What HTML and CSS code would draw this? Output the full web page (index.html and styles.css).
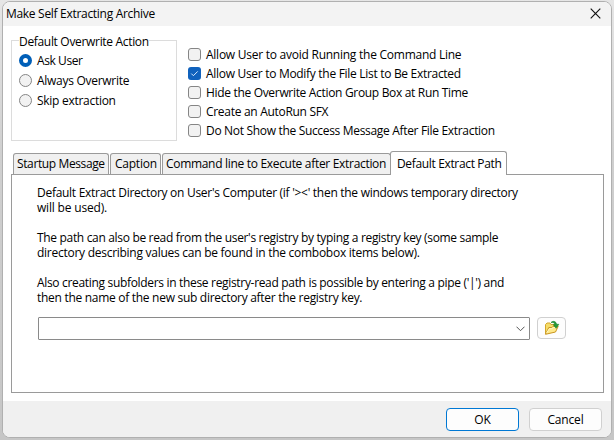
FILE: index.html
```html
<!DOCTYPE html>
<html lang="en">
<head>
<meta charset="utf-8">
<title>Make Self Extracting Archive</title>
<link rel="stylesheet" href="styles.css">
</head>
<body>
<div class="window">
  <header class="titlebar">
    <span>Make Self Extracting Archive</span>
    <svg class="close" width="11" height="11" viewBox="0 0 11 11"><path d="M.7.7l9.6 9.6M10.3.7L.7 10.3" stroke="#111" stroke-width="1.15"/></svg>
  </header>
  <main class="content">
    <section class="options">
      <div class="group">
        <div class="legend"><span>Default Overwrite Action</span></div>
        <label class="radio"><i class="dot on"></i><span class="ask">Ask User</span></label>
        <label class="radio"><i class="dot"></i><span>Always Overwrite</span></label>
        <label class="radio"><i class="dot"></i><span>Skip extraction</span></label>
      </div>
      <div class="checks">
        <label class="check"><i class="box"></i><span class="c1">Allow User to avoid Running the Command Line</span></label>
        <label class="check"><i class="box on"><svg width="13" height="13" viewBox="0 0 13 13"><path d="M3.3 6.6l2.1 2.1 4.3-4.3" fill="none" stroke="#d9ebff" stroke-width="1"/></svg></i><span class="c2">Allow User to Modify the File List to Be Extracted</span></label>
        <label class="check"><i class="box"></i><span class="c3">Hide the Overwrite Action Group Box at Run Time</span></label>
        <label class="check"><i class="box"></i><span class="c4">Create an AutoRun SFX</span></label>
        <label class="check"><i class="box"></i><span class="c5">Do Not Show the Success Message After File Extraction</span></label>
      </div>
    </section>
    <nav class="tabs">
      <div class="tab startup">Startup Message</div>
      <div class="tab caption">Caption</div>
      <div class="tab command">Command line to Execute after Extraction</div>
      <div class="tab active">Default Extract Path</div>
    </nav>
    <section class="panel">
      <p><span class="l1">Default Extract Directory on User's Computer (if '&gt;&lt;' then the windows temporary directory</span><span class="l2">will be used).</span></p>
      <p><span class="l3">The path can also be read from the user's registry by typing a registry key (some sample</span><span class="l4">directory describing values can be found in the combobox items below).</span></p>
      <p><span class="l5">Also creating subfolders in these registry-read path is possible by entering a pipe ('|') and</span><span class="l6">then the name of the new sub directory after the registry key.</span></p>
      <div class="row">
        <div class="combo"><svg width="9" height="6" viewBox="0 0 9 6"><path d="M.5.7l4 4 4-4" fill="none" stroke="#555" stroke-width="1"/></svg></div>
        <div class="browse">
          <svg width="16" height="16" viewBox="0 0 16 16">
            <path d="M1.5 14V4.5L3 3h3l1 1.5h4.5V8" fill="#f5dc68" stroke="#d3a52c"/>
            <path d="M1.5 14.3L4.8 7.5h3L9 6.3h5.2L11.5 12z" fill="#ffe98a" stroke="#c9951f"/>
            <path d="M2.5 13L5.3 8.7h2.9l1-1.2h2.6" fill="none" stroke="#fff7c4"/>
            <path d="M7 2.5C9 .6 12 1 12.6 4.3h2.2l-2.7 4-2.8-3.6h1.6C10.4 2.7 9 2.2 7 2.5z" fill="#249b38" stroke="#16802a" stroke-width=".6"/>
          </svg>
        </div>
      </div>
    </section>
  </main>
  <footer class="footer">
    <div class="button primary">OK</div>
    <div class="button">Cancel</div>
  </footer>
</div>
</body>
</html>
```
FILE: styles.css
```css
* { box-sizing: border-box; }
body {
  margin: 0;
  height: 440px;
  overflow: hidden;
  padding: 1px 2px 2px;
  background: linear-gradient(#e6e6e6, #cfcfcf 35%, #c6c6c6);
  font: 12px/15px "Open Sans", "Noto Sans", sans-serif;
  letter-spacing: -0.28px;
  color: #000;
  white-space: nowrap;
}
.window {
  width: 610px;
  height: 437px;
  display: flex;
  flex-direction: column;
  border: 1px solid #b0b0b0;
  border-radius: 8px;
  background: #fff;
  overflow: hidden;
}
.titlebar {
  height: 24px;
  flex: none;
  display: flex;
  align-items: center;
  justify-content: space-between;
  padding: 0 10px 2px 3px;
  background: #f3f3f3;
  letter-spacing: -0.3px;
}
.content { flex: 1; padding: 9px 7px 0 8px; }
.options { display: flex; gap: 11px; height: 115px; }
.group {
  width: 166px;
  height: 101px;
  margin-top: 5px;
  border: 1px solid #dcdcdc;
  padding-left: 7px;
}
.legend { height: 10px; margin-top: -1px; display: flex; align-items: flex-start; }
.legend span { margin-top: -6px; background: #fff; letter-spacing: -0.32px; }
.radio { display: flex; align-items: center; gap: 5px; height: 20px; }
.dot {
  width: 13px;
  height: 13px;
  border: 1px solid #858585;
  border-radius: 50%;
  background: #f2f2f2;
}
.dot.on { border: 4px solid #005fb8; background: #fff; }
.ask { letter-spacing: -0.42px; }
.checks { padding-top: 10px; }
.check { display: flex; align-items: center; gap: 5px; height: 19px; }
.box {
  width: 13px;
  height: 13px;
  border: 1px solid #858585;
  border-radius: 3px;
  background: #f2f2f2;
}
.box.on { border: 0; background: #1062bd; }
.box svg { display: block; }
.c1 { letter-spacing: -0.25px; }
.c2, .c4 { letter-spacing: -0.3px; }
.c3 { letter-spacing: -0.32px; }
.c5 { letter-spacing: -0.32px; }
.tabs { display: flex; align-items: flex-end; height: 24px; margin-left: 2px; }
.tab {
  height: 21px;
  margin-right: 1px;
  padding: 2px 0 0 3px;
  border: 1px solid #9a9a9a;
  border-bottom: 0;
  border-radius: 3px 3px 0 0;
  background: #f0f0f0;
}
.startup { width: 96px; letter-spacing: -0.38px; }
.caption { width: 51px; padding-left: 4px; letter-spacing: -0.24px; }
.command { width: 229px; letter-spacing: -0.31px; margin-right: 0; }
.tab.active {
  position: relative;
  width: 117px;
  height: 24px;
  margin: 0 0 -1px -1px;
  padding: 4px 0 0 6px;
  background: #fff;
  letter-spacing: -0.345px;
}
.panel {
  height: 219px;
  border: 1px solid #9a9a9a;
  padding: 10px 0 0 25px;
}
.panel p { margin: 0 0 15px; }
.panel p span { display: block; }
.l1 { letter-spacing: -0.285px; }
.l2 { letter-spacing: -0.18px; }
.l3 { letter-spacing: -0.325px; }
.l4 { letter-spacing: -0.265px; }
.l5 { letter-spacing: -0.322px; }
.l6 { letter-spacing: -0.29px; }
.row { display: flex; gap: 7px; margin-top: -3px; margin-left: 1px; }
.combo {
  width: 492px;
  height: 23px;
  border: 1px solid #8a8a8a;
  border-radius: 1px;
  display: flex;
  align-items: center;
  justify-content: flex-end;
  padding-right: 4px;
}
.browse {
  width: 29px;
  height: 22px;
  border: 1px solid #d0d0d0;
  border-radius: 4px;
  background: #fdfdfd;
  display: flex;
  align-items: center;
  justify-content: center;
}
.footer {
  height: 36px;
  flex: none;
  display: flex;
  gap: 10px;
  justify-content: flex-end;
  padding: 7px 9px 0 0;
  background: #f0f0f0;
}
.button {
  width: 73px;
  height: 23px;
  border: 1px solid #d0d0d0;
  border-radius: 4px;
  background: #fdfdfd;
  text-align: center;
  line-height: 22px;
  letter-spacing: -0.15px;
}
.primary { border-color: #0078d4; }
```
